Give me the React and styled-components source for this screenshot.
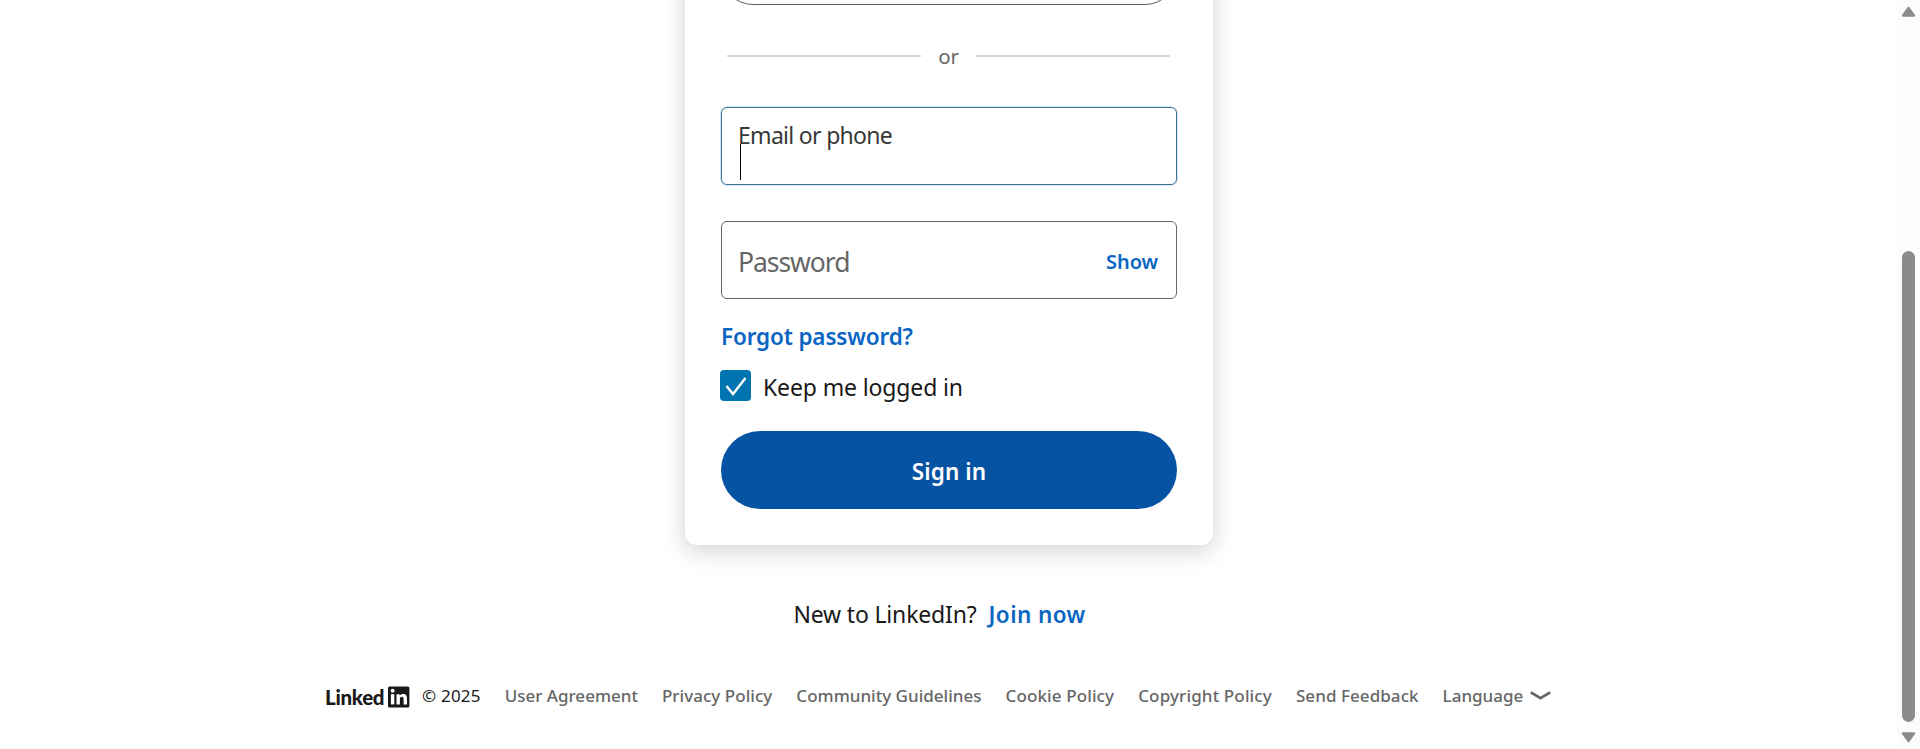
import React from "react";
import styled, { createGlobalStyle } from "styled-components";

const GlobalStyle = createGlobalStyle`
  *, *::before, *::after { box-sizing: border-box; }
  body { margin: 0; background: #fff; overflow: hidden; }
  body, button { font-family: "Noto Sans", "Open Sans", sans-serif; }
  button { border: 0; background: none; padding: 0; cursor: pointer; }
  a { text-decoration: none; }
`;

const Page = styled.div`
  display: flex;
  height: 749px;
  overflow: hidden;
  color: #191919;
`;

const Main = styled.main`
  flex: 1;
  display: flex;
  flex-direction: column;
  align-items: center;
  padding-left: 1px;
`;

const Card = styled.section`
  flex: none;
  width: 528px;
  margin-top: -95px;
  padding: 36px;
  border-radius: 12px;
  background: #fff;
  box-shadow: 0 6px 24px rgba(0, 0, 0, 0.18);
`;

const ProviderButton = styled.button`
  display: block;
  width: 100%;
  height: 64px;
  border: 1.5px solid #5e5e5e;
  border-radius: 32px;
`;

const Divider = styled.div`
  display: flex;
  align-items: center;
  height: 30px;
  margin: 36px 7px 0 6px;
  color: #666;
  font-size: 20.5px;
  letter-spacing: -0.1px;
  line-height: 30px;

  &::before, &::after {
    content: "";
    flex: 1;
    height: 2px;
    background: #d8d8d8;
  }
`;

const DividerText = styled.span`
  width: 55px;
  text-align: center;
`;

const Field = styled.label`
  display: flex;
  flex-direction: ${(p) => (p.$active ? "column" : "row")};
  align-items: ${(p) => (p.$active ? "flex-start" : "center")};
  justify-content: space-between;
  height: 78px;
  margin-top: 36px;
  padding: ${(p) => (p.$active ? "12px 17px 4px 16px" : "3px 18px 0 16px")};
  border: 1px solid ${(p) => (p.$active ? "#3f7194" : "#666")};
  border-radius: 6px;
  box-shadow: ${(p) => (p.$active ? "0 0 0 0.6px #b5cfe0" : "none")};
`;

const FieldLabel = styled.span`
  color: ${(p) => (p.$active ? "#383838" : "#666")};
  font-size: ${(p) => (p.$active ? 23 : 26.5)}px;
  letter-spacing: ${(p) => (p.$active ? -0.7 : -1.05)}px;
  line-height: 30px;
`;

const Caret = styled.span`
  width: 1px;
  height: 36px;
  margin: -6px 0 0 2px;
  background: #000;
`;

const TextLink = styled.a`
  color: #0a66c2;
  font-size: ${(p) => p.$size || 22.5}px;
  font-weight: 600;
  letter-spacing: ${(p) => p.$spacing || 0}px;
  line-height: 32px;
`;

const ForgotRow = styled.div`
  height: 32px;
  margin-top: 21px;
  padding-top: 1px;
`;

const RememberRow = styled.label`
  display: flex;
  gap: 12px;
  height: 31px;
  margin: 18px 0 0 -1px;
  font-size: 23px;
  letter-spacing: -0.13px;
  line-height: 34px;
`;

const CheckBox = styled.span`
  width: 31px;
  height: 31px;
  border-radius: 4px;
  background: #0073b1;

  svg { display: block; }
`;

const SubmitButton = styled.button`
  display: block;
  width: 100%;
  height: 78px;
  margin-top: 30px;
  padding-top: 3px;
  border-radius: 39px;
  background: #0653a3;
  color: #fff;
  font-size: 22.5px;
  font-weight: 600;
  letter-spacing: 0.1px;
`;

const JoinRow = styled.p`
  display: flex;
  gap: 12px;
  height: 32px;
  margin: 53px 19px 0 0;
  font-size: 23px;
  letter-spacing: -0.17px;
  line-height: 32px;

  ${TextLink} { padding-top: 1px; }
`;

const Footer = styled.footer`
  display: flex;
  align-items: center;
  align-self: flex-start;
  gap: 24px;
  height: 24px;
  margin: 54px 0 0 324px;
  font-size: 17px;
  line-height: 24px;
  white-space: nowrap;
`;

const Copyright = styled.div`
  display: flex;
  align-items: center;
  gap: 12px;
  letter-spacing: 0.2px;
`;

const Logo = styled.div`
  display: flex;
  align-items: center;
  justify-content: space-between;
  width: 85px;
  margin-top: 2px;

  svg { display: block; }
`;

const LogoText = styled.span`
  font-family: Lato, sans-serif;
  font-size: 20.5px;
  font-weight: 900;
  letter-spacing: -0.3px;
  line-height: 26px;
`;

const FooterLink = styled.a`
  color: #666;
  font-weight: 500;
  letter-spacing: ${(p) => p.$spacing || 0}px;
`;

const LanguageMenu = styled.button`
  display: flex;
  align-items: center;
  gap: 7px;
  color: #666;
  font-size: 17px;
  font-weight: 500;
  line-height: 24px;
`;

const ScrollTrack = styled.div`
  display: flex;
  flex-direction: column;
  align-items: center;
  justify-content: space-between;
  width: 23px;
  padding: 6px 0 6px;
  background: #fcfcfc;

  svg { display: block; }
`;

const ScrollThumb = styled.div`
  width: 13px;
  height: 471px;
  margin-top: auto;
  margin-bottom: 10px;
  border-radius: 7px;
  background: #8b8b8b;
`;

const footerLinks = [
  ["User Agreement", 0],
  ["Privacy Policy", 0.04],
  ["Community Guidelines", 0.01],
  ["Cookie Policy", 0.12],
  ["Copyright Policy", 0.14],
  ["Send Feedback", 0.06],
];

function LinkedInLogo() {
  return (
    <Logo>
      <LogoText>Linked</LogoText>
      <svg width="22" height="22" viewBox="63 0 22 22">
        <rect x="63" y="0.4" width="21.4" height="21" rx="1.5" fill="#191919" />
        <g fill="#fff">
          <circle cx="67.6" cy="4.8" r="2" />
          <rect x="65.9" y="8.2" width="3.4" height="10.2" />
          <path d="M71.5 8.2h3.200v1.400c.6-1 1.800-1.700 3.300-1.700 3.200 0 4 2 4 4.800v5.700h-3.400v-5.200c0-1.300-.2-2.500-1.700-2.500s-2 1.200-2 2.500v5.200h-3.400z" />
        </g>
      </svg>
    </Logo>
  );
}

function ScrollArrow({ down }) {
  return (
    <svg width="15" height="11" viewBox="0 0 15 11">
      <path
        d={down ? "M1.8 1.3h11.400L7.5 9.3z" : "M1.8 9.7h11.400L7.5 1.7z"}
        fill="#8b8b8b"
        stroke="#8b8b8b"
        strokeWidth="2"
        strokeLinejoin="round"
      />
    </svg>
  );
}

export default function App() {
  return (
    <>
      <GlobalStyle />
      <Page>
        <Main>
          <Card>
            <ProviderButton />
            <Divider>
              <DividerText>or</DividerText>
            </Divider>
            <Field $active>
              <FieldLabel $active>Email or phone</FieldLabel>
              <Caret />
            </Field>
            <Field>
              <FieldLabel>Password</FieldLabel>
              <TextLink $size={20} $spacing={-0.1}>Show</TextLink>
            </Field>
            <ForgotRow>
              <TextLink $spacing={-0.15}>Forgot password?</TextLink>
            </ForgotRow>
            <RememberRow>
              <CheckBox>
                <svg width="31" height="31" viewBox="0 0 31 31" fill="none" stroke="#fff" strokeWidth="2.4">
                  <path d="M6.5 16l6.500 8L25.500 8" />
                </svg>
              </CheckBox>
              Keep me logged in
            </RememberRow>
            <SubmitButton>Sign in</SubmitButton>
          </Card>
          <JoinRow>
            New to LinkedIn?
            <TextLink $spacing={0.4}>Join now</TextLink>
          </JoinRow>
          <Footer>
            <Copyright>
              <LinkedInLogo />© 2025
            </Copyright>
            {footerLinks.map(([label, spacing]) => (
              <FooterLink key={label} $spacing={spacing}>{label}</FooterLink>
            ))}
            <LanguageMenu>
              Language
              <svg width="21" height="10" viewBox="0 0 21 10" fill="none" stroke="#666" strokeWidth="2.8">
                <path d="M.8 1.400l9.700 5.800 9.700-5.800" />
              </svg>
            </LanguageMenu>
          </Footer>
        </Main>
        <ScrollTrack>
          <ScrollArrow />
          <ScrollThumb />
          <ScrollArrow down />
        </ScrollTrack>
      </Page>
    </>
  );
}
